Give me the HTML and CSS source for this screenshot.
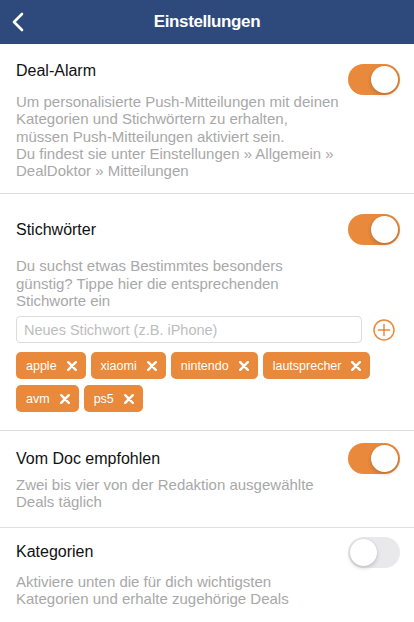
FILE: index.html
```html
<!DOCTYPE html>
<html lang="de">
<head>
<meta charset="utf-8">
<title>Einstellungen</title>
<link rel="stylesheet" href="styles.css">
</head>
<body>
<header class="navbar">
  <button class="back" aria-label="Zurück">
    <svg width="14" height="20" viewBox="0 0 14 20"><path d="M11 2 L3 10 L11 18" fill="none" stroke="#fff" stroke-width="2.6" stroke-linecap="round" stroke-linejoin="round"/></svg>
  </button>
  <h1 class="nav-title">Einstellungen</h1>
  <span class="nav-spacer"></span>
</header>

<main class="settings">
  <section class="setting setting-alarm">
    <div class="setting-row">
      <h2 class="setting-title">Deal-Alarm</h2>
      <span class="toggle on"><span class="thumb"></span></span>
    </div>
    <p class="setting-desc">Um personalisierte Push-Mitteilungen mit deinen<br>Kategorien und Stichwörtern zu erhalten,<br>müssen Push-Mitteilungen aktiviert sein.<br>Du findest sie unter Einstellungen » Allgemein »<br>DealDoktor » Mitteilungen</p>
  </section>

  <section class="setting setting-keywords">
    <div class="setting-row">
      <h2 class="setting-title">Stichwörter</h2>
      <span class="toggle on"><span class="thumb"></span></span>
    </div>
    <p class="setting-desc">Du suchst etwas Bestimmtes besonders<br>günstig? Tippe hier die entsprechenden<br>Stichworte ein</p>
    <div class="keyword-input">
      <input class="keyword-field" type="text" placeholder="Neues Stichwort (z.B. iPhone)">
      <span class="add-btn">
        <svg width="22" height="22" viewBox="0 0 22 22"><circle cx="11" cy="11" r="10" fill="none" stroke="#e8893b" stroke-width="1.5"/><path d="M11 5.5 V16.5 M5.5 11 H16.5" stroke="#e8893b" stroke-width="1.5" stroke-linecap="round"/></svg>
      </span>
    </div>
    <ul class="tags">
      <li class="tag">apple<svg class="x" width="10" height="10" viewBox="0 0 10 10"><path d="M1.2 1.2 L8.8 8.8 M8.8 1.2 L1.2 8.8" stroke="#fff" stroke-width="2.4" stroke-linecap="round"/></svg></li>
      <li class="tag">xiaomi<svg class="x" width="10" height="10" viewBox="0 0 10 10"><path d="M1.2 1.2 L8.8 8.8 M8.8 1.2 L1.2 8.8" stroke="#fff" stroke-width="2.4" stroke-linecap="round"/></svg></li>
      <li class="tag">nintendo<svg class="x" width="10" height="10" viewBox="0 0 10 10"><path d="M1.2 1.2 L8.8 8.8 M8.8 1.2 L1.2 8.8" stroke="#fff" stroke-width="2.4" stroke-linecap="round"/></svg></li>
      <li class="tag">lautsprecher<svg class="x" width="10" height="10" viewBox="0 0 10 10"><path d="M1.2 1.2 L8.8 8.8 M8.8 1.2 L1.2 8.8" stroke="#fff" stroke-width="2.4" stroke-linecap="round"/></svg></li>
      <li class="tag">avm<svg class="x" width="10" height="10" viewBox="0 0 10 10"><path d="M1.2 1.2 L8.8 8.8 M8.8 1.2 L1.2 8.8" stroke="#fff" stroke-width="2.4" stroke-linecap="round"/></svg></li>
      <li class="tag">ps5<svg class="x" width="10" height="10" viewBox="0 0 10 10"><path d="M1.2 1.2 L8.8 8.8 M8.8 1.2 L1.2 8.8" stroke="#fff" stroke-width="2.4" stroke-linecap="round"/></svg></li>
    </ul>
  </section>

  <section class="setting setting-doc">
    <div class="setting-row">
      <h2 class="setting-title">Vom Doc empfohlen</h2>
      <span class="toggle on"><span class="thumb"></span></span>
    </div>
    <p class="setting-desc">Zwei bis vier von der Redaktion ausgewählte<br>Deals täglich</p>
  </section>

  <section class="setting setting-cats">
    <div class="setting-row">
      <h2 class="setting-title">Kategorien</h2>
      <span class="toggle off"><span class="thumb"></span></span>
    </div>
    <p class="setting-desc">Aktiviere unten die für dich wichtigsten<br>Kategorien und erhalte zugehörige Deals</p>
  </section>
</main>
</body>
</html>
```
FILE: styles.css
```css
* { box-sizing: border-box; }

html, body {
  margin: 0;
  padding: 0;
  background: #fff;
  font-family: "Liberation Sans", Arial, sans-serif;
  color: #111;
  overflow: hidden;
}

.navbar {
  height: 44px;
  background: #2e4a7c;
  display: grid;
  grid-template-columns: 44px 1fr 44px;
  align-items: center;
}

.back {
  background: none;
  border: 0;
  padding: 0 0 0 11px;
  height: 44px;
  display: flex;
  align-items: center;
  cursor: pointer;
}

.nav-title {
  margin: 0;
  text-align: center;
  color: #fff;
  font-size: 17px;
  font-weight: 700;
  letter-spacing: -0.4px;
  line-height: 44px;
}

.settings { display: block; }

.setting {
  padding: 0 14px 0 16px;
  border-bottom: 1px solid #dedede;
}

.setting:last-child { border-bottom: 0; }

.setting-row {
  display: flex;
  justify-content: space-between;
  align-items: center;
}

.setting-title {
  margin: 0;
  font-size: 16px;
  font-weight: 400;
  line-height: 20px;
  color: #111;
}

.setting-desc {
  margin: 0;
  font-size: 15px;
  line-height: 17.25px;
  color: #a8a8a8;
}

/* toggles */
.toggle {
  width: 52px;
  height: 31px;
  border-radius: 16px;
  display: flex;
  align-items: center;
  padding: 2px;
  flex-shrink: 0;
}
.toggle .thumb {
  width: 27px;
  height: 27px;
  border-radius: 50%;
  background: #fff;
  box-shadow: 0 2px 4px rgba(0,0,0,0.18), 0 0 1px rgba(0,0,0,0.1);
}
.toggle.on {
  background: #e8893b;
  justify-content: flex-end;
}
.toggle.off {
  background: #e9e9eb;
  justify-content: flex-start;
}

/* section-specific spacing */
.setting-alarm { padding-top: 20px; padding-bottom: 14px; }
.setting-alarm .setting-row { align-items: flex-start; }
.setting-alarm .setting-title { margin-top: -3px; }
.setting-alarm .setting-desc { margin-top: -2px; }

.setting-keywords { padding-top: 20px; padding-bottom: 18px; }
.setting-keywords .setting-desc { margin-top: 12px; }

.setting-doc { padding-top: 12px; padding-bottom: 16px; }
.setting-doc .setting-desc { margin-top: 2px; }

.setting-cats { padding-top: 9px; padding-bottom: 14px; }
.setting-cats .setting-desc { margin-top: 5px; }

/* keyword input */
.keyword-input {
  margin-top: 7px;
  display: flex;
  align-items: center;
  gap: 11px;
}
.keyword-field {
  width: 346px;
  height: 27px;
  border: 1px solid #dcdcdc;
  border-radius: 4px;
  padding: 0 7px;
  font-family: "Liberation Sans", Arial, sans-serif;
  font-size: 14.5px;
  color: #111;
  outline: none;
}
.keyword-field::placeholder { color: #bdbdbd; }

.add-btn {
  width: 22px;
  height: 22px;
  display: flex;
}

/* tags */
.tags {
  list-style: none;
  margin: 9px 0 0;
  padding: 0;
  display: flex;
  flex-wrap: wrap;
  gap: 6px 5px;
  max-width: 370px;
}
.tag {
  height: 27px;
  display: flex;
  align-items: center;
  gap: 10px;
  padding: 0 9px 0 10px;
  background: #e8893b;
  color: #fff;
  border-radius: 5px;
  font-size: 12.5px;
}
.tag .x { display: block; }
```
